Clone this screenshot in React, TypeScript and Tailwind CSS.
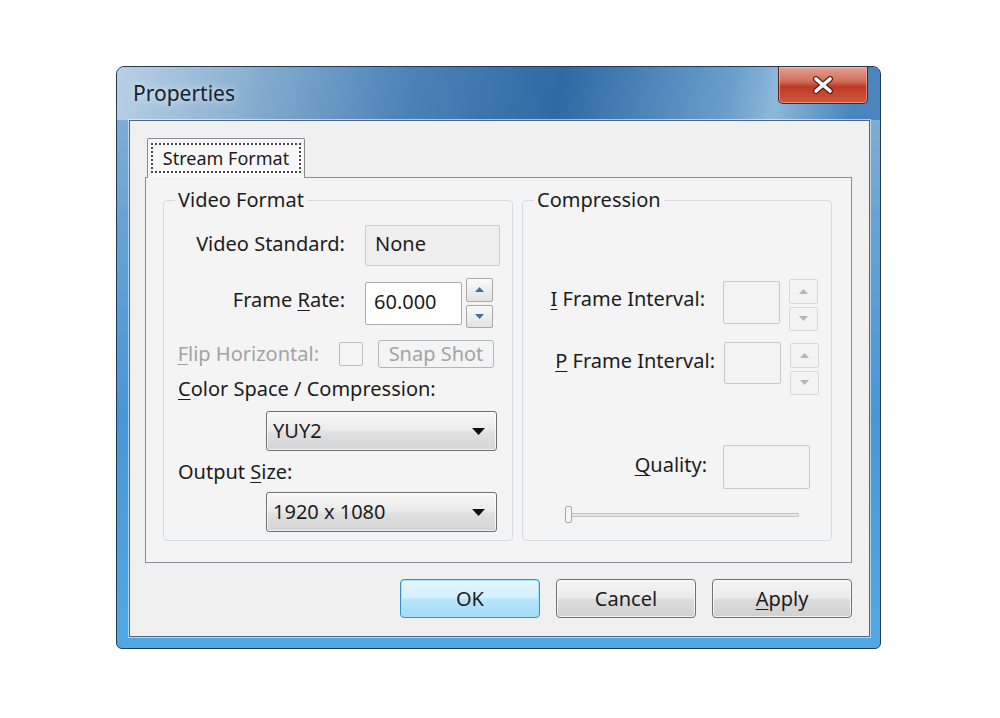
import type { ReactNode } from 'react';

const FONT = "font-['Noto_Sans',sans-serif]";

function Tri({ dir, color }: { dir: 'up' | 'down'; color: string }) {
  return (
    <svg width="9" height="5" viewBox="0 0 9 5">
      <path d={dir === 'up' ? 'M0 5 L4.5 0 L9 5 Z' : 'M0 0 L4.5 5 L9 0 Z'} fill={color} />
    </svg>
  );
}

function Spinner({ disabled, className }: { disabled?: boolean; className: string }) {
  const btn = disabled
    ? 'border-[#d8d8d8] bg-[#f3f3f3]'
    : 'border-[#a8a8a8] bg-[linear-gradient(180deg,#fbfbfb,#e2e2e2)]';
  const color = disabled ? '#b4b4b4' : '#45709e';
  return (
    <div className={`flex flex-col gap-[3px] ${className}`}>
      <div className={`flex flex-1 items-center justify-center rounded-[2px] border ${btn}`}>
        <Tri dir="up" color={color} />
      </div>
      <div className={`flex flex-1 items-center justify-center rounded-[2px] border ${btn}`}>
        <Tri dir="down" color={color} />
      </div>
    </div>
  );
}

function U({ children }: { children: ReactNode }) {
  return <span className="underline decoration-1 underline-offset-[3px]">{children}</span>;
}

function Combo({ value }: { value: string }) {
  return (
    <div className="ml-[102px] flex h-[40px] w-[231px] items-center justify-between rounded-[3px] border border-[#707070] bg-[linear-gradient(180deg,#f7f7f7_0%,#ececec_45%,#e0e0e0_55%,#d5d5d5_100%)] pl-[6px] pr-[11px] shadow-[inset_0_0_0_1px_rgba(255,255,255,0.7)]">
      <span>{value}</span>
      <svg width="13" height="7" viewBox="0 0 13 7">
        <path d="M0 0 L6.5 7 L13 0 Z" fill="#111" />
      </svg>
    </div>
  );
}

function Button({ label, primary }: { label: ReactNode; primary?: boolean }) {
  return (
    <div
      className={`flex h-[39px] w-[140px] items-center justify-center rounded-[4px] border ${
        primary
          ? 'border-[#3c8fc4] bg-[linear-gradient(180deg,#e6f7fe_0%,#d3f0fd_48%,#b8e6fb_52%,#a4dcf6_100%)] shadow-[inset_0_0_0_1px_#a2e3fb]'
          : 'border-[#707070] bg-[linear-gradient(180deg,#f4f4f4_0%,#ebebeb_48%,#dddddd_52%,#d0d0d0_100%)] shadow-[inset_0_0_0_1px_rgba(255,255,255,0.75)]'
      }`}
    >
      {label}
    </div>
  );
}

export default function App() {
  return (
    <div className={`h-[718px] w-[1000px] bg-white pl-[116px] pt-[66px] text-[20px] leading-[24px] text-[#1c1c1c] ${FONT}`}>
      {/* window */}
      <div className="h-[583px] w-[765px] rounded-b-[6px] rounded-t-[8px] border border-[#24384e] bg-[linear-gradient(180deg,#8ab3d6_0%,#6aa3d2_25%,#4896d5_60%,#52a8e2_100%)]">
        {/* title bar */}
        <div className="flex h-[53px] items-start justify-between rounded-t-[7px] bg-[linear-gradient(100deg,#b9d0e4_0%,#93b6d5_14%,#4c83b8_38%,#2f6aa5_58%,#6a9fcb_80%,#8db8da_86%,#4a86bd_96%)] pl-[16px] pr-[12px]">
          <span className="self-center pb-[2px] text-[21px] text-[#16222e] [text-shadow:0_0_8px_rgba(255,255,255,0.9)]">
            Properties
          </span>
          <div className="flex h-[37px] w-[90px] items-center justify-center rounded-b-[5px] border border-t-0 border-[#5b2019] bg-[linear-gradient(180deg,#e2a294_0%,#d06e5a_40%,#bd3a24_55%,#cf5a40_100%)] shadow-[inset_0_0_0_1px_rgba(255,200,190,0.5)]">
            <svg width="24" height="18" viewBox="0 0 24 18">
              <path d="M5 3 L19 15 M19 3 L5 15" stroke="#5a1d15" strokeWidth="6" strokeLinecap="round" />
              <path d="M5 3 L19 15 M19 3 L5 15" stroke="#ffffff" strokeWidth="3.6" strokeLinecap="round" />
            </svg>
          </div>
        </div>

        {/* client */}
        <div className="ml-[12px] h-[517px] w-[741px] border border-[#4d6680] bg-[#f0f0f0] pl-[15px] pt-[17px] shadow-[0_0_0_1px_rgba(255,255,255,0.55)]">
          {/* tab strip */}
          <div className="flex h-[39px] pl-[2px]">
            <div className="relative z-10 h-[40px] w-[158px] rounded-t-[2px] border border-b-0 border-[#898c95] bg-[#f7f7f7] px-[3px] pb-[5px] pt-[4px]">
              <div className="flex h-full items-center justify-center border-2 border-dotted border-[#4a4a4a] text-[18px]">
                Stream Format
              </div>
            </div>
          </div>

          {/* panel */}
          <div className="flex h-[386px] w-[707px] gap-[9px] border border-[#898c95] bg-[#f4f4f4] pl-[17px] pt-[10px]">
            {/* Video Format */}
            <fieldset className="h-[353px] w-[350px] rounded-[4px] border border-[#d4dce3]">
              <legend className="ml-[11px] px-[3px]">Video Format</legend>

              <div className="mt-[13px] flex items-center">
                <span className="w-[181px] pb-[3px] text-right">Video Standard:</span>
                <div className="ml-[20px] flex h-[41px] w-[135px] items-center rounded-[2px] border border-[#cdcdcd] bg-[#efefef] pb-[3px] pl-[9px]">
                  None
                </div>
              </div>

              <div className="mt-[12px] flex h-[50px] items-center">
                <span className="w-[181px] pb-[6px] text-right">
                  Frame <U>R</U>ate:
                </span>
                <div className="ml-[20px] flex h-[43px] w-[97px] items-center rounded-[2px] border border-[#abadb3] bg-white pb-[2px] pl-[8px]">
                  60.000
                </div>
                <Spinner className="ml-[4px] h-[50px] w-[27px]" />
              </div>

              <div className="mt-[12px] flex h-[28px] items-center text-[#a3a3a3]">
                <span className="w-[155px] text-right">
                  <U>F</U>lip Horizontal:
                </span>
                <div className="ml-[20px] h-[24px] w-[24px] rounded-[2px] border border-[#bdbdbd] bg-[#f5f5f5]" />
                <div className="ml-[15px] flex h-[28px] w-[116px] items-center justify-center rounded-[3px] border border-[#b2b6b9] bg-[#f4f4f4]">
                  Snap Shot
                </div>
              </div>

              <div className="mt-[9px] pl-[14px]">
                <U>C</U>olor Space / Compression:
              </div>
              <div className="mt-[10px]">
                <Combo value="YUY2" />
              </div>

              <div className="mt-[9px] pl-[14px]">
                Output <U>S</U>ize:
              </div>
              <div className="mt-[8px]">
                <Combo value="1920 x 1080" />
              </div>
            </fieldset>

            {/* Compression */}
            <fieldset className="h-[353px] w-[310px] rounded-[4px] border border-[#d4dce3]">
              <legend className="ml-[11px] px-[3px]">Compression</legend>

              <div className="mt-[67px] flex items-start">
                <span className="mt-[8px] w-[182px] text-right">
                  <U>I</U> Frame Interval:
                </span>
                <div className="ml-[18px] mt-[2px] h-[43px] w-[57px] rounded-[2px] border border-[#c8c8c8] bg-[#f3f3f3]" />
                <Spinner disabled className="ml-[9px] h-[52px] w-[29px]" />
              </div>

              <div className="mt-[11px] flex items-start">
                <span className="mt-[7px] w-[192px] text-right">
                  <U>P</U> Frame Interval:
                </span>
                <div className="ml-[9px] h-[42px] w-[57px] rounded-[2px] border border-[#c8c8c8] bg-[#f3f3f3]" />
                <Spinner disabled className="ml-[9px] mt-[1px] h-[52px] w-[29px]" />
              </div>

              <div className="mt-[50px] flex items-start">
                <span className="mt-[8px] w-[184px] text-right">
                  <U>Q</U>uality:
                </span>
                <div className="ml-[16px] h-[44px] w-[87px] rounded-[2px] border border-[#c8c8c8] bg-[#f3f3f3]" />
              </div>

              <div className="relative ml-[42px] mt-[17px] flex h-[17px] w-[234px] items-center">
                <div className="h-[4px] w-full rounded-[1px] border border-[#c4c4c4] bg-[#e6e6e6]" />
                <div className="absolute left-0 top-0 h-[17px] w-[7px] rounded-[2px] border border-[#a8a8a8] bg-[#f6f6f6]" />
              </div>
            </fieldset>
          </div>

          {/* buttons */}
          <div className="mt-[16px] flex w-[707px] justify-end gap-[16px]">
            <Button label="OK" primary />
            <Button label="Cancel" />
            <Button
              label={
                <span>
                  <U>A</U>pply
                </span>
              }
            />
          </div>
        </div>
      </div>
    </div>
  );
}
